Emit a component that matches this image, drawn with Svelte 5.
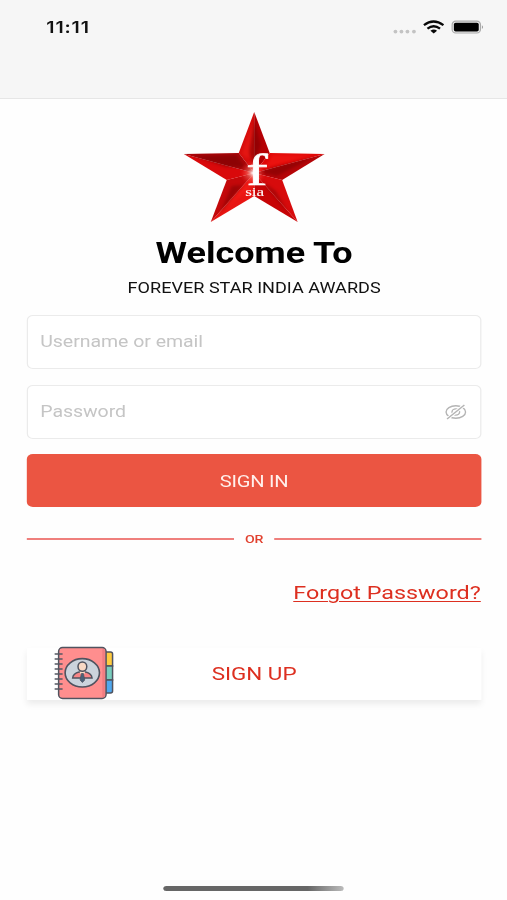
<script>
	let username = $state("");
	let password = $state("");
	let hidden = $state(true);

	// shaded half-points of the logo star, light and dark sides
	const facets = [
		{ points: "71.5,1 71.5,62 56,42", fill: "#d60d0d" },
		{ points: "71.5,1 87,42 71.5,62", fill: "#b50005" },
		{ points: "87,42 142,43 71.5,62", fill: "#e00808" },
		{ points: "142,43 99.5,69 71.5,62", fill: "#b50508" },
		{ points: "99.5,69 115,111 71.5,62", fill: "#d70b0c" },
		{ points: "115,111 71.5,85 71.5,62", fill: "#c70406" },
		{ points: "71.5,85 28,111 71.5,62", fill: "#e81512" },
		{ points: "28,111 44,69 71.5,62", fill: "#c3080a" },
		{ points: "44,69 1,43 71.5,62", fill: "#d9090b" },
		{ points: "1,43 56,42 71.5,62", fill: "#a90508" },
	];
	const rings = [8, 13, 18, 23, 28, 33, 38, 43];
</script>

<div class="screen">
	<header>
		<span class="time">11:11</span>
		<svg class="status" viewBox="0 0 92 16" preserveAspectRatio="none">
			<g fill="#c3c3c3">
				<circle cx="3" cy="11.6" r="1.9" />
				<circle cx="9" cy="11.6" r="1.9" />
				<circle cx="15" cy="11.6" r="1.9" />
				<circle cx="21.5" cy="11.6" r="1.9" />
			</g>
			<g fill="none" stroke="#080808" stroke-width="2.3">
				<path d="M31.5 5.2Q41 -2.2 51 5.2" />
				<path d="M35 8.6Q41.2 3.8 47.6 8.6" />
			</g>
			<path d="M38 10.7Q41.3 8.4 44.6 10.7L41.3 13.4Z" fill="#080808" />
			<rect x="59.7" y="1.2" width="28.3" height="11.8" rx="3.6" fill="#ededed" stroke="#aaa" stroke-width="1.2" />
			<rect x="61.4" y="2.7" width="24.9" height="8.9" rx="1.8" fill="#000" />
			<path d="M89.5 5.2Q91.6 7 89.5 9Z" fill="#999" />
		</svg>
	</header>

	<main>
		<svg class="logo" viewBox="0 0 144 112" preserveAspectRatio="none">
			<defs>
				<radialGradient id="glow">
					<stop offset="0" stop-color="#fff" stop-opacity="0.95" />
					<stop offset="0.4" stop-color="#ff8c80" stop-opacity="0.5" />
					<stop offset="1" stop-color="#f22" stop-opacity="0" />
				</radialGradient>
				<filter id="soft">
					<feGaussianBlur stdDeviation="1.6" />
				</filter>
			</defs>
			{#each facets as facet}
				<polygon points={facet.points} fill={facet.fill} />
			{/each}
			<g fill="#650006" opacity="0.4" filter="url(#soft)">
				<path d="M71.5 8L78 34L71.5 55L66 40Z" />
				<path d="M11 45L54 44L62 56L43 56Z" />
				<path d="M132 46L91 56L77 61L94 65Z" />
				<path d="M37 103L60 74L49 75Z" />
				<path d="M106 102L93 80L78 69Z" />
			</g>
			<g fill="#ff251e" opacity="0.35" filter="url(#soft)">
				<path d="M71 9L59 43L66 48Z" />
				<path d="M90 44L132 44L82 57Z" />
				<path d="M40 98L67 78L68 69Z" />
			</g>
			<circle cx="70" cy="62" r="13" fill="url(#glow)" />
			<g fill="#fff" stroke="#fff" font-family="Liberation Serif, serif">
				<text x="63.5" y="74.5" font-size="45" stroke-width="0.6" textLength="21.5" lengthAdjust="spacingAndGlyphs">f</text>
				<text x="62.5" y="85.5" font-size="12" stroke-width="0.1" textLength="19" lengthAdjust="spacingAndGlyphs">sia</text>
			</g>
		</svg>

		<h1>Welcome To</h1>
		<p class="subtitle">FOREVER STAR INDIA AWARDS</p>

		<form onsubmit={(ev) => ev.preventDefault()}>
			<label class="field">
				<input type="text" placeholder="Username or email" bind:value={username} />
			</label>
			<label class="field">
				<input type={hidden ? "password" : "text"} placeholder="Password" bind:value={password} />
				<button type="button" class="eye" aria-label="Show password" onclick={() => (hidden = !hidden)}>
					<svg viewBox="0 0 22 16" preserveAspectRatio="none">
						<g fill="none" stroke="#b4b4b4" stroke-width="1.4">
							<ellipse cx="11" cy="8" rx="9.8" ry="6.2" />
							<ellipse cx="11" cy="8" rx="3.8" ry="3.1" />
							<path d="M2.2 15L19.6 1" stroke="#fff" stroke-width="3.4" />
							<path d="M2.2 15L19.6 1" stroke-width="1.5" />
						</g>
					</svg>
				</button>
			</label>
			<button class="signin">SIGN IN</button>
		</form>

		<div class="divider"><span>OR</span></div>

		<a class="forgot" href="#forgot">Forgot Password?</a>

		<button class="signup">
			<svg viewBox="0 0 61 54" preserveAspectRatio="none">
				<g stroke="#50535f" stroke-width="1.5">
					<path d="M51 6H57Q59 6 59 8V20H51Z" fill="#ffcb3f" />
					<path d="M51 20H59V34H51Z" fill="#78cdbd" />
					<path d="M51 34H59V45Q59 47 57 47H51Z" fill="#50a8ee" />
					<rect x="5" y="1.5" width="47.5" height="51" rx="4" fill="#ff8e8e" />
				</g>
				<path d="M50 3V51" stroke="#f17d81" stroke-width="2.5" />
				<g stroke="#555863" stroke-width="1.3" stroke-linecap="round">
					{#each rings as y}
						<path d="M1.5 {y}H8.5" />
					{/each}
				</g>
				<ellipse cx="28.7" cy="26.8" rx="17.2" ry="14.2" fill="#cbd3dc" stroke="#50535f" stroke-width="1.6" />
				<path d="M19 32Q19.5 27.5 25.5 26H32Q38 27.5 38.5 32Z" fill="#f98586" stroke="#50535f" stroke-width="1.4" />
				<path d="M26.3 24H31.3V27L28.8 30L26.3 27Z" fill="#f8d9c5" />
				<ellipse cx="28.8" cy="20.6" rx="4.4" ry="4.7" fill="#f8d9c5" stroke="#50535f" stroke-width="1.5" />
				<path d="M27.8 27.5H29.8L31.1 34L28.8 36.5L26.5 34Z" fill="#496178" stroke="#50535f" stroke-width="0.8" />
			</svg>
			<span>SIGN UP</span>
		</button>
	</main>

	<div class="home"></div>
</div>

<style>
	:global(body) {
		background: #fff;
		overflow: hidden;
	}
	/* laid out at 416px, widened to the full 507px */
	.screen {
		box-sizing: border-box;
		width: 416px;
		height: 900px;
		display: flex;
		flex-direction: column;
		font-family: Roboto, sans-serif;
		background: #fefefe;
		transform: scaleX(1.21875);
		transform-origin: 0 0;
	}
	header {
		box-sizing: border-box;
		height: 98.5px;
		display: flex;
		justify-content: space-between;
		align-items: flex-start;
		padding: 17px 19px 0 38px;
		background: #f6f6f6;
		border-bottom: 1px solid #e6e6e6;
	}
	.time {
		font: 600 16px/20px Inter, sans-serif;
		letter-spacing: 0.7px;
		color: #111;
	}
	.status {
		width: 75.5px;
		height: 16px;
		margin-top: 3px;
	}
	main {
		flex: 1;
		display: flex;
		flex-direction: column;
		padding: 0 21px 0 22px;
	}
	.logo {
		width: 118px;
		height: 112px;
		margin: 12.5px 0 0 127.6px;
	}
	h1 {
		margin: 13px 0 0;
		font-size: 29.5px;
		line-height: 34px;
		font-weight: 700;
		text-align: center;
		color: #000;
	}
	.subtitle {
		margin: 8px 0 0;
		font-size: 14.85px;
		line-height: 20px;
		text-align: center;
		color: #111;
	}
	form {
		margin-top: 16.5px;
		display: flex;
		flex-direction: column;
		gap: 16px;
	}
	.field {
		box-sizing: border-box;
		height: 54px;
		display: flex;
		align-items: center;
		padding: 0 11.5px 0 10px;
		border: 1px solid #ebebeb;
		border-radius: 5px;
		background: #fff;
	}
	input {
		flex: 1;
		min-width: 0;
		padding: 0;
		border: 0;
		outline: 0;
		background: none;
		font: 16px/24px Roboto, sans-serif;
		letter-spacing: -0.03px;
		color: #222;
	}
	input::placeholder {
		color: #c5c5c5;
	}
	button {
		padding: 0;
		border: 0;
		font-family: inherit;
		cursor: pointer;
	}
	.eye {
		background: none;
		line-height: 0;
	}
	.eye svg {
		width: 18px;
		height: 16px;
	}
	.signin {
		height: 53px;
		margin-top: -0.5px;
		padding-top: 1px;
		border-radius: 5px;
		background: #eb5542;
		color: #fff0ec;
		font-size: 16.5px;
		letter-spacing: -0.2px;
	}
	.divider {
		display: flex;
		align-items: center;
		gap: 9px;
		height: 20px;
		margin-top: 22px;
		font-size: 11.6px;
		font-weight: 500;
		letter-spacing: -0.2px;
		color: #e1412f;
	}
	.divider::before,
	.divider::after {
		content: "";
		flex: 1;
		height: 1.5px;
		background: #ef7f7c;
	}
	.forgot {
		align-self: flex-end;
		margin: 31px 0.5px 0 0;
		font-size: 19.15px;
		line-height: 26px;
		color: #dd2f20;
		text-decoration: underline;
		text-decoration-thickness: 1px;
		text-underline-offset: 2px;
	}
	.signup {
		position: relative;
		height: 52px;
		margin-top: 41.5px;
		background: #fff;
		box-shadow: 0 4px 6px rgba(0, 0, 0, 0.08);
		color: #dd2f20;
		font-size: 18.4px;
	}
	.signup svg {
		position: absolute;
		left: 21.7px;
		top: -1.5px;
		width: 50px;
		height: 54px;
	}
	.home {
		width: 148px;
		height: 5px;
		margin: 0 auto 9px;
		border-radius: 3px;
		background: linear-gradient(90deg, #666 80%, #bbb);
	}
</style>
